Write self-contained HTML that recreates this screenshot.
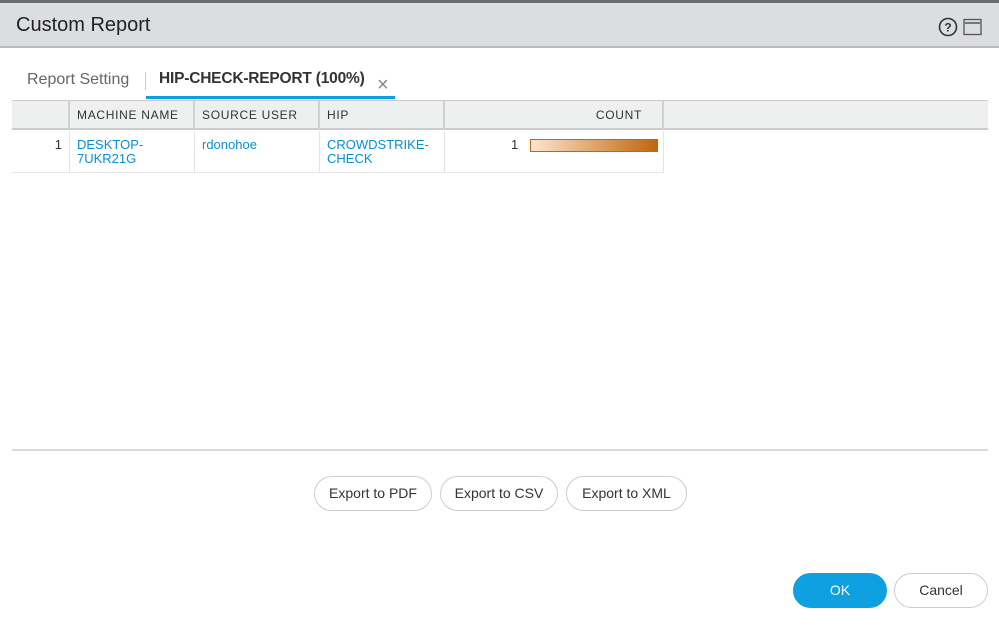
<!DOCTYPE html>
<html><head><style>
*{box-sizing:border-box;margin:0;padding:0}
body{width:999px;height:627px;background:#fff;font-family:"Liberation Sans",sans-serif;position:relative;overflow:hidden;color:#333}
.abs{position:absolute}
.topbar{left:0;top:0;width:999px;height:3px;background:#6b6c6e}
.hdr{left:0;top:3px;width:999px;height:45px;background:#dcdddf;border-bottom:2px solid #b9bbbd}
.title{left:16px;top:14px;font-size:20px;color:#222}
.tab1{left:27px;top:71px;font-size:16px;color:#666}
.sep{left:145px;top:72px;width:1px;height:18px;background:#ccc}
.tab2{left:159px;top:70px;font-size:15.5px;font-weight:bold;color:#333;letter-spacing:-0.2px}
.tabline{left:146px;top:96px;width:249px;height:3px;background:#0ea0dc}
.x{left:377px;top:74px;font-size:20px;color:#888}
.th{top:100px;height:30px;background:#eef0f0;border-top:1px solid #ccc;border-bottom:2px solid #ccc;border-right:2px solid #d0d0d0;font-size:12px;letter-spacing:0.7px;color:#333;padding:7px 7px}
.td{top:131px;height:42px;border-right:1px solid #e4e4e4;border-bottom:1px solid #e8e8e8;font-size:13px;color:#0a8fd0;padding:7px 7px;line-height:14px}
.btn{height:35px;border:1px solid #ccc;border-radius:18px;font-size:14px;color:#333;text-align:center;line-height:33px;background:#fff}
</style></head><body>
<div class="abs topbar"></div>
<div class="abs hdr"></div>
<div class="abs title">Custom Report</div>
<svg class="abs" style="left:938px;top:17px" width="46" height="20">
<circle cx="10" cy="10" r="8.5" fill="none" stroke="#333" stroke-width="1.6"/>
<text x="10" y="14.5" font-size="12" font-weight="bold" text-anchor="middle" fill="#333" font-family="Liberation Sans">?</text>
<rect x="26" y="2.5" width="17" height="15" fill="none" stroke="#555" stroke-width="1.3"/>
<rect x="27" y="5" width="15" height="2" fill="#777"/>
</svg>
<div class="abs tab1">Report Setting</div>
<div class="abs sep"></div>
<div class="abs tab2">HIP-CHECK-REPORT (100%)</div>
<div class="abs x">×</div>
<div class="abs tabline"></div>
<div class="abs th" style="left:12px;width:58px"></div>
<div class="abs th" style="left:70px;width:125px">MACHINE NAME</div>
<div class="abs th" style="left:195px;width:125px">SOURCE USER</div>
<div class="abs th" style="left:320px;width:125px">HIP</div>
<div class="abs th" style="left:445px;width:219px;text-align:right;padding-right:20px">COUNT</div>
<div class="abs th" style="left:664px;width:324px;border-right:none"></div>
<div class="abs td" style="left:12px;width:58px;color:#333;text-align:right;border-right:1px solid #e4e4e4">1</div>
<div class="abs td" style="left:70px;width:125px">DESKTOP-<br>7UKR21G</div>
<div class="abs td" style="left:195px;width:125px">rdonohoe</div>
<div class="abs td" style="left:320px;width:125px">CROWDSTRIKE-<br>CHECK</div>
<div class="abs td" style="left:445px;width:219px;color:#333;padding-left:66px">1</div>
<div class="abs" style="left:530px;top:139px;width:128px;height:13px;border:1px solid #b86a1c;background:linear-gradient(to right,#fbe6cf,#c0660c)"></div>
<div class="abs" style="left:12px;top:449px;width:976px;height:2px;background:#d8dadc"></div>
<div class="abs btn" style="left:314px;top:476px;width:118px">Export to PDF</div>
<div class="abs btn" style="left:440px;top:476px;width:118px">Export to CSV</div>
<div class="abs btn" style="left:566px;top:476px;width:121px">Export to XML</div>
<div class="abs btn" style="left:793px;top:573px;width:94px;background:#0ea0e0;border-color:#0ea0e0;color:#fff">OK</div>
<div class="abs btn" style="left:894px;top:573px;width:94px">Cancel</div>
</body></html>
